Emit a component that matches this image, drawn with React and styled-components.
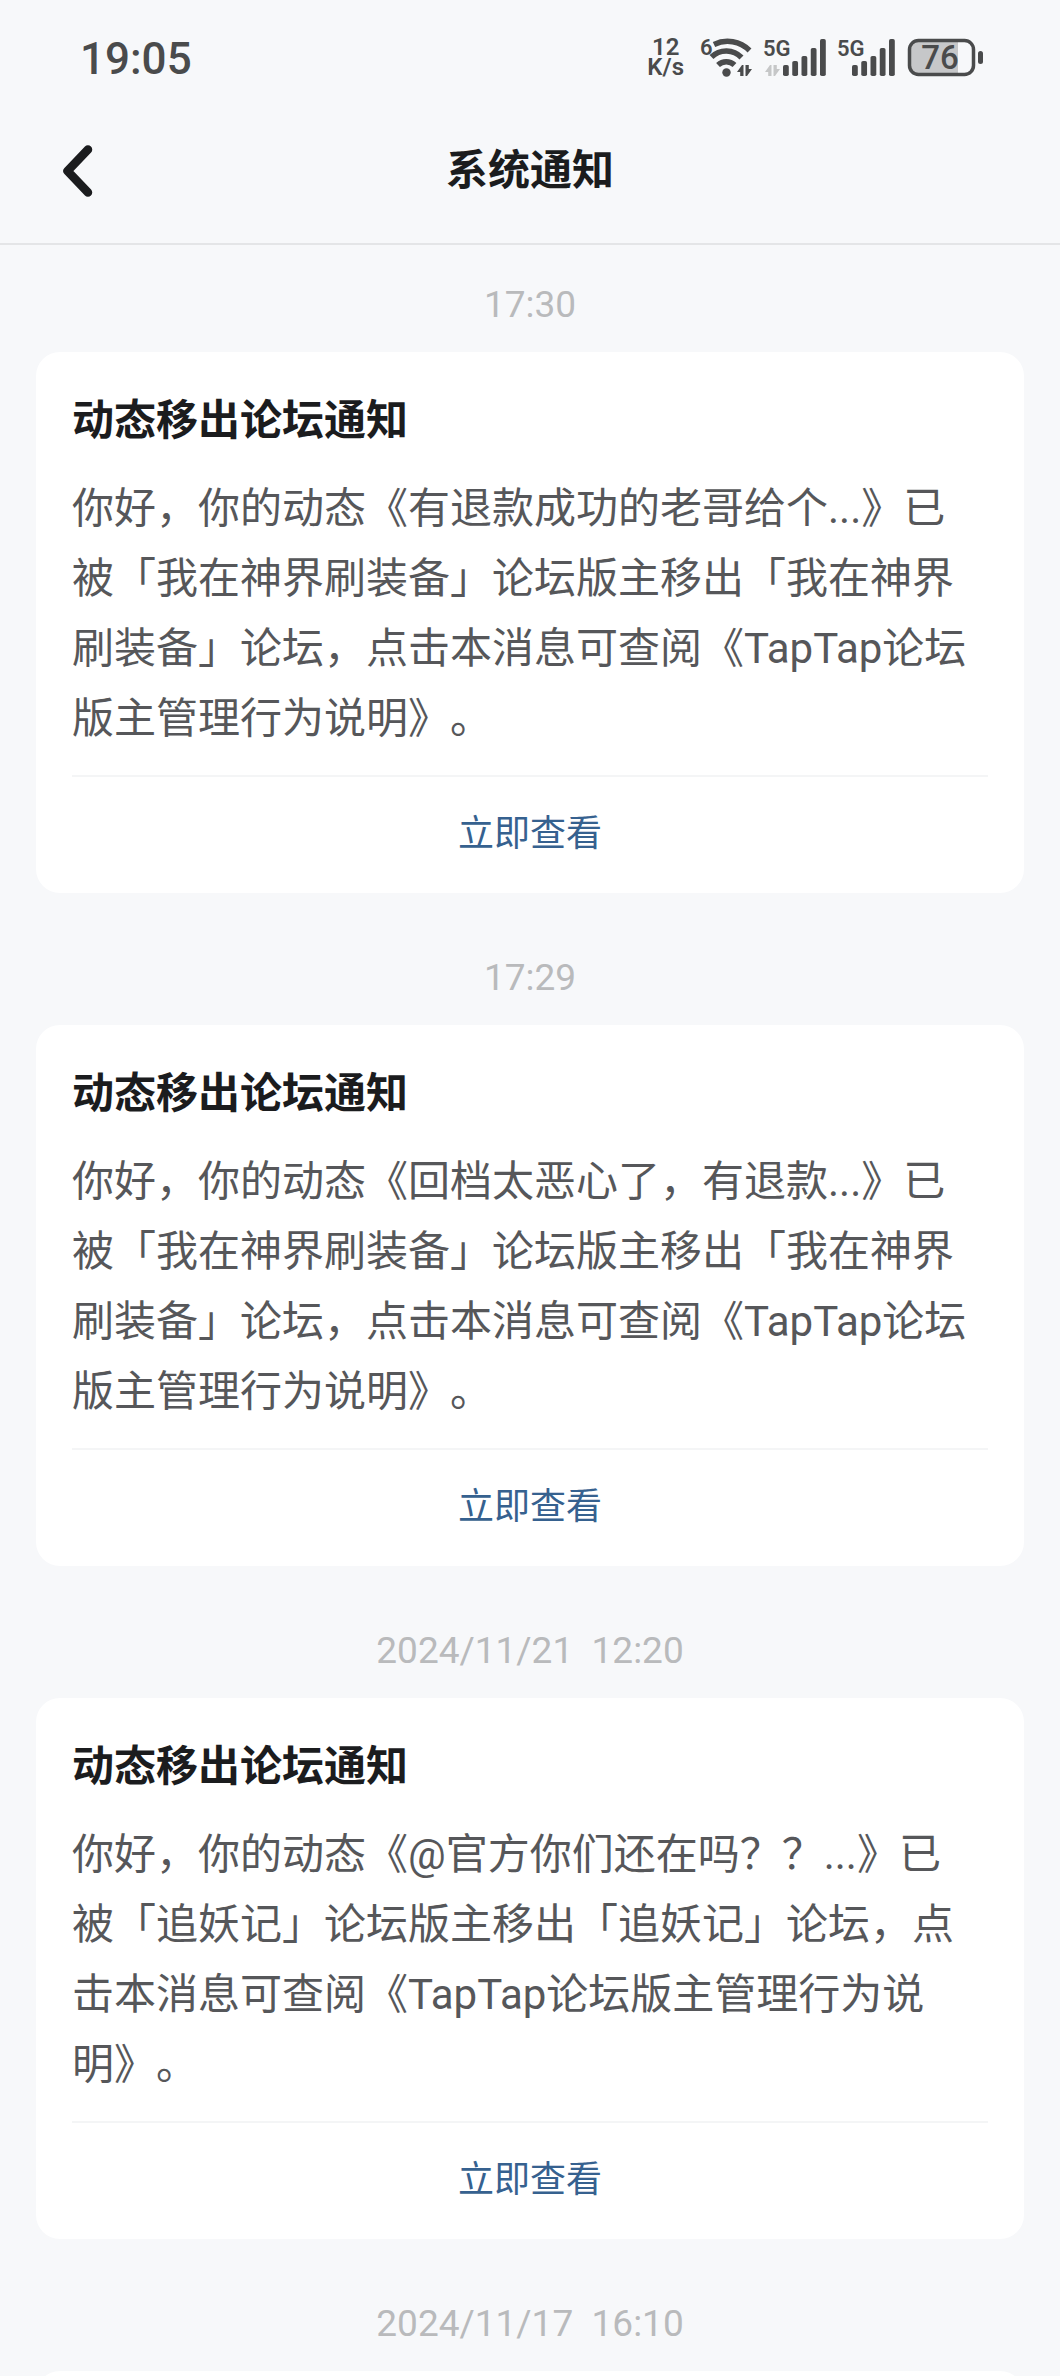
import React from "react";
import styled, { createGlobalStyle } from "styled-components";

const GlobalStyle = createGlobalStyle`
  * { box-sizing: border-box; }
  body {
    margin: 0;
    background: #f7f8fa;
    font-family: Roboto, "Noto Sans CJK SC", sans-serif;
    text-spacing-trim: space-all;
  }
`;

const Screen = styled.div`
  height: 100vh;
  display: flex;
  flex-direction: column;
  overflow: hidden;
`;

const StatusBar = styled.div`
  display: flex;
  align-items: center;
  justify-content: space-between;
  height: 98px;
  padding: 16px 76px 0 80px;
  color: #4a4b4c;
`;

const Clock = styled.time`
  padding-top: 4px;
  font-size: 44px;
  line-height: 52px;
  font-weight: 500;
`;

const StatusIcons = styled.div`
  display: flex;
  align-items: center;
  gap: 12px;
`;

const Speed = styled.div`
  display: flex;
  flex-direction: column;
  align-items: center;
  margin-right: 4px;
  font-size: 24px;
  line-height: 20px;
  font-weight: 600;
`;

const Glyph = styled.svg`
  display: block;
  overflow: visible;
  fill: currentColor;
  font-family: Roboto, sans-serif;
  font-weight: 600;
`;

const NavBar = styled.header`
  display: grid;
  grid-template-columns: 1fr auto 1fr;
  align-items: center;
  height: 147px;
  padding: 0 54px;
  border-bottom: 2px solid #e4e5e7;
  color: #1b1c1e;
`;

const BackButton = styled.button`
  display: flex;
  justify-self: start;
  padding: 0;
  border: 0;
  background: none;
  color: inherit;
`;

const NavTitle = styled.h1`
  margin: 0;
  font-size: 42px;
  line-height: 58px;
  font-weight: 700;
`;

const List = styled.main`
  flex: 1;
  min-height: 0;
  padding: 32px 36px 0;
  overflow: hidden;
`;

const Entry = styled.section`
  margin-bottom: 57px;
`;

const Stamp = styled.time`
  display: block;
  margin-bottom: 19px;
  font-size: 37px;
  line-height: 56px;
  text-align: center;
  white-space: pre;
  color: #b9babc;
`;

const Card = styled.article`
  min-height: 72px;
  padding: 40px 36px 0;
  border-radius: 24px;
  background: #fff;
`;

const CardTitle = styled.h2`
  margin: 0 0 24px;
  font-size: 42px;
  line-height: 58px;
  font-weight: 700;
  color: #1b1c1e;
`;

const CardText = styled.p`
  margin: 0 0 21px;
  padding-right: 12px;
  font-size: 42px;
  line-height: 70px;
  color: #56575a;
`;

const CardAction = styled.button`
  display: block;
  width: 100%;
  padding: 29px 0 31px;
  border: 0;
  border-top: 2px solid #f4f5f6;
  background: none;
  font-family: inherit;
  font-size: 36px;
  line-height: 56px;
  text-align: center;
  color: #36618f;
`;

const notices = [
  {
    time: "17:30",
    title: "动态移出论坛通知",
    text: "你好，你的动态《有退款成功的老哥给个...》已被「我在神界刷装备」论坛版主移出「我在神界刷装备」论坛，点击本消息可查阅《TapTap论坛版主管理行为说明》。",
  },
  {
    time: "17:29",
    title: "动态移出论坛通知",
    text: "你好，你的动态《回档太恶心了，有退款...》已被「我在神界刷装备」论坛版主移出「我在神界刷装备」论坛，点击本消息可查阅《TapTap论坛版主管理行为说明》。",
  },
  {
    time: "2024/11/21  12:20",
    title: "动态移出论坛通知",
    text: "你好，你的动态《@官方你们还在吗？？...》已被「追妖记」论坛版主移出「追妖记」论坛，点击本消息可查阅《TapTap论坛版主管理行为说明》。",
  },
  { time: "2024/11/17  16:10" },
];

function DataArrows({ x, color }) {
  return (
    <g fill={color} transform={`translate(${x} 28)`}>
      <path d="M0 7 L5 0 H6.5 V11 H3.2 V7 Z" />
      <path d="M8.5 0 H11.8 V4 H15 L10 11 H8.5 Z" />
    </g>
  );
}

function Wifi() {
  return (
    <Glyph width="52" height="52" viewBox="0 -6 52 52" role="img" aria-label="Wi-Fi 6">
      <text x="0" y="18" fontSize="22">6</text>
      <g fill="none" stroke="currentColor" strokeWidth="5.5">
        <path d="M14 7.5 A31 31 0 0 1 49.5 13.5" />
        <path d="M11.5 20 A21 21 0 0 1 41.5 20.5" />
        <path d="M18 28 A12 12 0 0 1 34.5 28" />
      </g>
      <circle cx="26.5" cy="35.5" r="4.2" />
      <DataArrows x={37} color="currentColor" />
    </Glyph>
  );
}

const barTops = [28, 24, 19, 11, 2];

function Signal({ start, arrows }) {
  return (
    <Glyph width={start + 43} height="52" viewBox={`0 -6 ${start + 43} 52`} role="img" aria-label="5G">
      <text x="-1" y="19" fontSize="22">5G</text>
      {arrows && <DataArrows x={1} color="#c6c7c8" />}
      {barTops.map((top, i) => (
        <rect key={top} x={start + i * 9.25} y={top} width="5.8" height={39 - top} rx="1.8" />
      ))}
    </Glyph>
  );
}

function Battery() {
  return (
    <Glyph width="77" height="52" viewBox="0 -6 77 52" role="img" aria-label="76%">
      <path d="M12 4 H51 V37 H12 Q3 37 3 28 V13 Q3 4 12 4 Z" fill="#c6c7c9" />
      <rect x="2.5" y="3.5" width="64" height="34" rx="9" fill="none" stroke="currentColor" strokeWidth="3.5" />
      <rect x="71" y="14" width="5" height="13" rx="2.5" />
      <text x="33" y="32" fontSize="33" fontWeight="500" textAnchor="middle">76</text>
    </Glyph>
  );
}

export default function App() {
  return (
    <Screen>
      <GlobalStyle />
      <StatusBar>
        <Clock>19:05</Clock>
        <StatusIcons>
          <Speed>
            <span>12</span>
            <span>K/s</span>
          </Speed>
          <Wifi />
          <Signal start={19} arrows />
          <Signal start={14} />
          <Battery />
        </StatusIcons>
      </StatusBar>
      <NavBar>
        <BackButton type="button" aria-label="返回">
          <svg width="44" height="56" viewBox="0 0 44 56" fill="none" stroke="currentColor" strokeWidth="8.5" strokeLinecap="round" strokeLinejoin="round">
            <path d="M34 6.5 L13.5 28 L34 49.5" />
          </svg>
        </BackButton>
        <NavTitle>系统通知</NavTitle>
      </NavBar>
      <List>
        {notices.map((n) => (
          <Entry key={n.time}>
            <Stamp>{n.time}</Stamp>
            <Card>
              {n.title && (
                <>
                  <CardTitle>{n.title}</CardTitle>
                  <CardText>{n.text}</CardText>
                  <CardAction type="button">立即查看</CardAction>
                </>
              )}
            </Card>
          </Entry>
        ))}
      </List>
    </Screen>
  );
}
